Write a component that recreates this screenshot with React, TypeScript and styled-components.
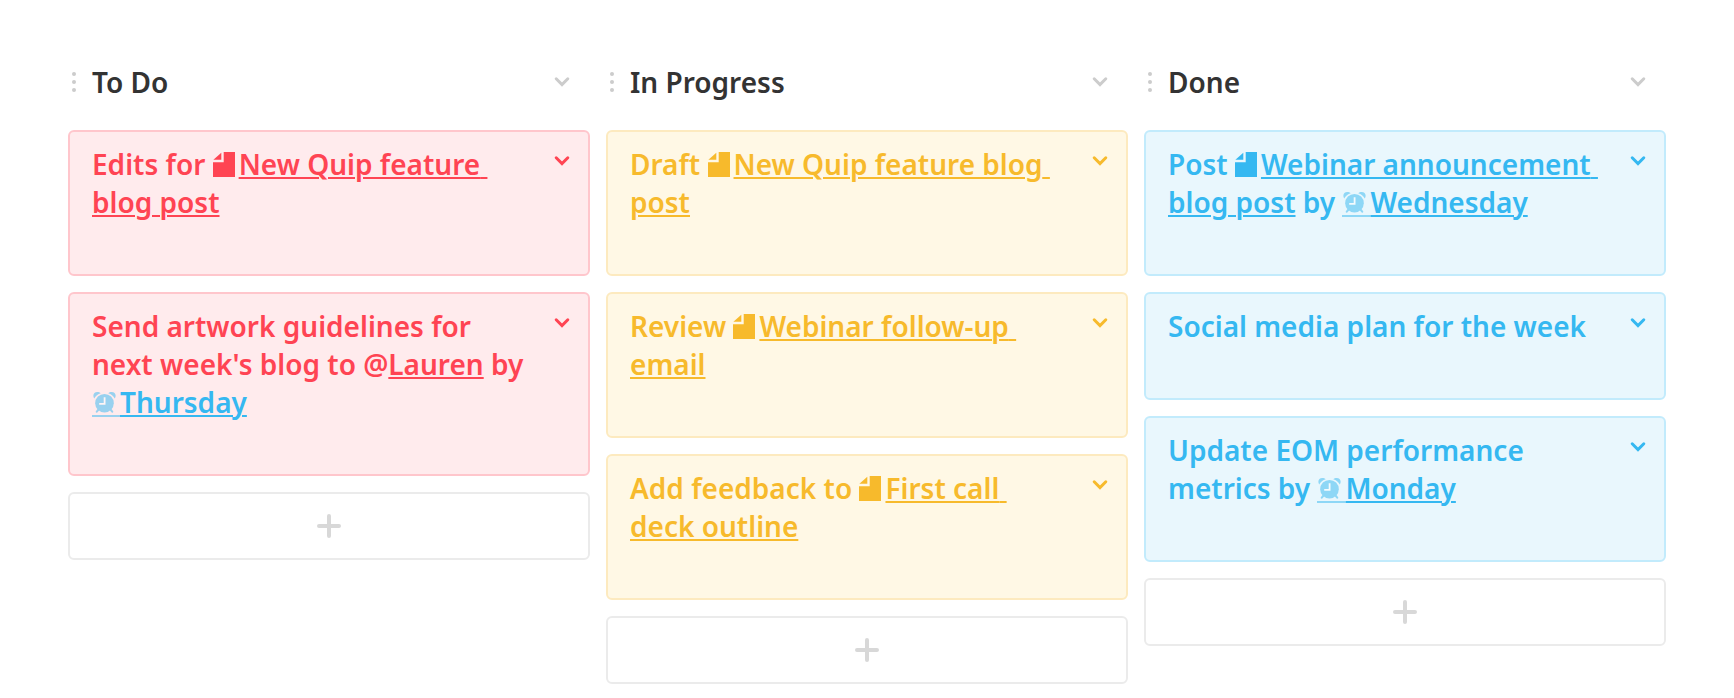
import React from "react";
import styled, { createGlobalStyle } from "styled-components";

const GlobalStyle = createGlobalStyle`
  *, *::before, *::after { box-sizing: border-box; }
  body {
    margin: 0;
    background: #fff;
    color: #333;
    font-family: "Noto Sans", "Open Sans", sans-serif;
    font-size: 28px;
    font-weight: 600;
    line-height: 38px;
  }
`;

type Tone = "red" | "yellow" | "blue";

const tones: Record<Tone, { text: string; fill: string; border: string }> = {
  red: { text: "#ff4453", fill: "#ffebed", border: "#ffc6cc" },
  yellow: { text: "#f7ba2c", fill: "#fff8e5", border: "#fdeabf" },
  blue: { text: "#35b8f1", fill: "#e9f7fd", border: "#c2ebfc" },
};

const Board = styled.main`
  display: grid;
  grid-template-columns: repeat(3, minmax(0, 1fr));
  align-items: start;
  gap: 16px;
  padding: 50px 68px 14px;
`;

const Column = styled.section`
  display: flex;
  flex-direction: column;
  gap: 16px;
`;

const ColumnHeader = styled.header`
  display: flex;
  align-items: center;
  height: 64px;
  padding: 0 20px 0 3px;
`;

const ColumnTitle = styled.h2`
  flex: 1;
  margin: 0 0 0 15px;
  font-size: 28px;
  font-weight: 600;
  line-height: 38px;
`;

const IconButton = styled.button`
  display: flex;
  flex: none;
  padding: 0;
  border: 0;
  background: none;
  color: inherit;
  cursor: pointer;
`;

const MutedButton = styled(IconButton)`
  color: #ccc;
`;

const CardList = styled.ul`
  display: flex;
  flex-direction: column;
  gap: 16px;
  margin: 0;
  padding: 0;
  list-style: none;
`;

const CardBox = styled.li<{ $tone: Tone }>`
  display: flex;
  align-items: flex-start;
  gap: 26px;
  padding: 13px 18px 53px 22px;
  border: 2px solid ${(p) => tones[p.$tone].border};
  border-radius: 6px;
  background: ${(p) => tones[p.$tone].fill};
  color: ${(p) => tones[p.$tone].text};
`;

const CardText = styled.p`
  flex: 1;
  min-width: 0;
  margin: 0;
  white-space: pre-wrap;
`;

const CardMenu = styled(IconButton)`
  padding-top: 10px;
`;

const TextLink = styled.a`
  color: inherit;
  text-decoration: underline;
  text-decoration-thickness: 2px;
  text-underline-offset: 2px;
`;

const DueLink = styled(TextLink)`
  color: ${tones.blue.text};
  white-space: nowrap;
`;

const DocGlyph = styled.svg`
  width: 22px;
  height: 25px;
  margin-right: 4px;
  vertical-align: -2px;
`;

const ClockSlot = styled.span`
  display: inline-flex;
  padding: 0 4px 2px 1px;
  border-bottom: 2px solid currentColor;
  opacity: 0.5;
`;

const AddButton = styled.button`
  display: flex;
  align-items: center;
  justify-content: center;
  height: 68px;
  border: 2px solid #ebebeb;
  border-radius: 6px;
  background: #fff;
  color: #d8d8d8;
  cursor: pointer;
`;

const Chevron = () => (
  <svg width="16" height="12" viewBox="0 0 16 12" fill="none" aria-hidden="true">
    <path d="M2.2 2.8 8 8.6l5.8-5.8" stroke="currentColor" strokeWidth="3" strokeLinecap="round" />
  </svg>
);

const Grip = () => (
  <svg width="6" height="20" viewBox="0 0 6 20" fill="currentColor" aria-hidden="true">
    <circle cx="3" cy="2" r="2" />
    <circle cx="3" cy="10" r="2" />
    <circle cx="3" cy="18" r="2" />
  </svg>
);

const Plus = () => (
  <svg width="24" height="24" viewBox="0 0 24 24" fill="none" aria-hidden="true">
    <path d="M12 2v20M2 12h20" stroke="currentColor" strokeWidth="4" strokeLinecap="round" />
  </svg>
);

const Clock = () => (
  <svg width="23" height="21" viewBox="0 0 23 21" fill="none" aria-hidden="true">
    <circle cx="11.5" cy="11.2" r="9.3" fill="currentColor" />
    <path d="M1.2 6.6C-.8 3.2 1 0 4.3 0 5.700 0 6.900.4 7.700 1.200 4.900 2.100 2.600 4 1.200 6.600Z" fill="currentColor" />
    <path d="M21.800 6.600C23.800 3.200 22 0 18.700 0 17.300 0 16.100.4 15.300 1.200 18.100 2.100 20.400 4 21.800 6.600Z" fill="currentColor" />
    <path d="M5.500 17.500 3.800 19.600M17.500 17.500l1.700 2.100" stroke="currentColor" strokeWidth="2" strokeLinecap="round" />
    <path d="M11.600 5.300v6.500H6.200" stroke="#fff" strokeWidth="1.800" />
  </svg>
);

const DocLink = ({ children }: { children: string }) => (
  <>
    <DocGlyph viewBox="0 0 22 25" fill="currentColor" aria-hidden="true">
      <path d="M.4 7.700 8.300.7v7z" />
      <path d="M10.700 0H22v25H0V10.300h10.700z" />
    </DocGlyph>
    <TextLink href="#">{children}</TextLink>
  </>
);

const DateLink = ({ children }: { children: string }) => (
  <DueLink href="#">
    <ClockSlot>
      <Clock />
    </ClockSlot>
    {children}
  </DueLink>
);

const Card = ({ tone, children }: { tone: Tone; children: React.ReactNode }) => (
  <CardBox $tone={tone}>
    <CardText>{children}</CardText>
    <CardMenu type="button" aria-label="Card options">
      <Chevron />
    </CardMenu>
  </CardBox>
);

const BoardColumn = ({ title, children }: { title: string; children: React.ReactNode }) => (
  <Column aria-label={title}>
    <ColumnHeader>
      <MutedButton type="button" aria-label={`Move ${title}`}>
        <Grip />
      </MutedButton>
      <ColumnTitle>{title}</ColumnTitle>
      <MutedButton type="button" aria-label={`${title} options`}>
        <Chevron />
      </MutedButton>
    </ColumnHeader>
    <CardList>{children}</CardList>
    <AddButton type="button" aria-label={`Add card to ${title}`}>
      <Plus />
    </AddButton>
  </Column>
);

export default function App() {
  return (
    <>
      <GlobalStyle />
      <Board>
        <BoardColumn title="To Do">
          <Card tone="red">
            Edits for <DocLink>New Quip feature blog post</DocLink>
          </Card>
          <Card tone="red">
            Send artwork guidelines for next week's blog to @<TextLink href="#">Lauren</TextLink> by{" "}
            <DateLink>Thursday</DateLink>
          </Card>
        </BoardColumn>
        <BoardColumn title="In Progress">
          <Card tone="yellow">
            Draft <DocLink>New Quip feature blog post</DocLink>
          </Card>
          <Card tone="yellow">
            Review <DocLink>Webinar follow-up email</DocLink>
          </Card>
          <Card tone="yellow">
            Add feedback to <DocLink>First call deck outline</DocLink>
          </Card>
        </BoardColumn>
        <BoardColumn title="Done">
          <Card tone="blue">
            Post <DocLink>Webinar announcement blog post</DocLink> by <DateLink>Wednesday</DateLink>
          </Card>
          <Card tone="blue">Social media plan for the week</Card>
          <Card tone="blue">
            Update EOM performance metrics by <DateLink>Monday</DateLink>
          </Card>
        </BoardColumn>
      </Board>
    </>
  );
}
